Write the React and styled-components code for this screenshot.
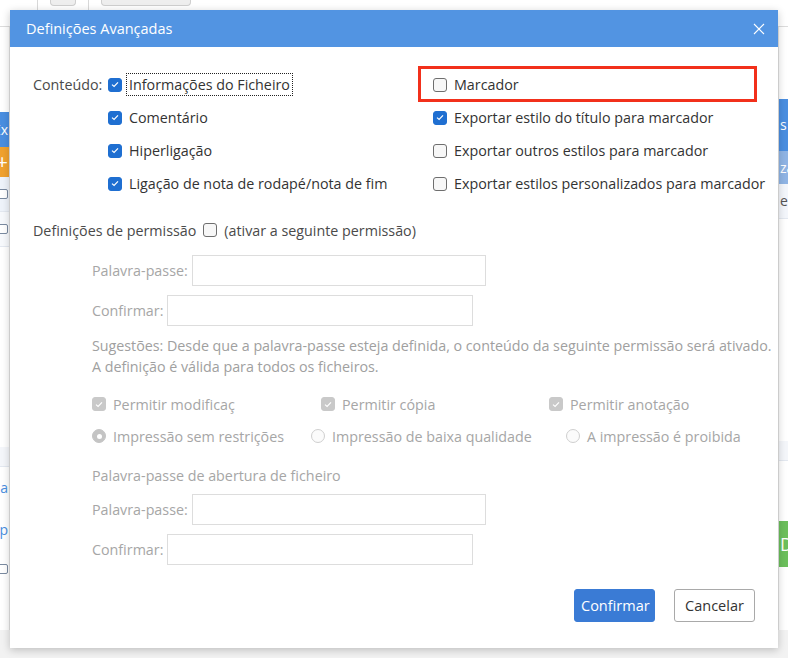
import React from "react"
import styled, { createGlobalStyle } from "styled-components"

const GlobalStyle = createGlobalStyle`
  html, body { margin: 0; padding: 0; }
  body {
    width: 788px;
    height: 658px;
    overflow: hidden;
    background: #ffffff;
    font-family: "Open Sans", "Noto Sans", sans-serif;
  }
  * { box-sizing: border-box; }
`

const text_dark = "#333333"
const text_muted = "#a6a6a6"
const blue_title = "#5294e2"
const blue_check = "#1f6fd1"

/* ---------- background application (mostly hidden) ---------- */

const Screen = styled.div`
  position: relative;
  width: 788px;
  height: 658px;
  overflow: hidden;
  background: #ffffff;
  display: flex;
  flex-direction: column;
`

const TopBar = styled.div`
  height: 27px;
  flex-shrink: 0;
  background: #ffffff;
  border-bottom: 1px solid #dcdcdc;
  display: flex;
  align-items: flex-start;
  gap: 12px;
  padding-left: 37px;
`

const TopDivider = styled.div`
  width: 1px;
  height: 12px;
  background: #d8d8d8;
`

const TopPill = styled.div`
  width: ${(p) => p.w}px;
  height: 6px;
  border: 1px solid #cfcfcf;
  border-top: none;
  border-radius: 0 0 4px 4px;
  background: #eeeeee;
`

const Workspace = styled.div`
  flex: 1;
  display: flex;
  justify-content: space-between;
  background: #f2f2f2;
`

const SidePane = styled.div`
  width: ${(p) => p.w}px;
  overflow: hidden;
  display: flex;
  flex-direction: column;
  align-items: ${(p) => (p.right ? "flex-start" : "flex-end")};
  background: #ffffff;
  border-${(p) => (p.right ? "left" : "right")}: 1px solid #e3e3e3;
  height: 603px;
  font-size: 14px;
`

const PaneBlock = styled.div`
  width: 40px;
  height: ${(p) => p.h}px;
  flex-shrink: 0;
  background: ${(p) => p.bg || "transparent"};
  color: ${(p) => p.fg || "#ffffff"};
  border-bottom: ${(p) => (p.line ? "1px solid #e3e8f0" : "none")};
  display: flex;
  align-items: center;
  justify-content: ${(p) => (p.right ? "flex-start" : "flex-end")};
  padding: 0 1px;
  white-space: nowrap;
  line-height: 1;
`

const MiniBox = styled.span`
  width: 10px;
  height: 10px;
  border: 1px solid #7a8aa0;
  border-radius: 2px;
  background: #ffffff;
`

/* ---------- dialog ---------- */

const Dialog = styled.div`
  position: absolute;
  top: 10px;
  left: 10px;
  width: 768px;
  height: 638px;
  background: #ffffff;
  box-shadow: 0 2px 8px rgba(0, 0, 0, 0.22);
  display: flex;
  flex-direction: column;
  color: ${text_dark};
  font-size: 14.3px;
`

const Header = styled.div`
  height: 37px;
  flex-shrink: 0;
  background: ${blue_title};
  display: flex;
  align-items: center;
  justify-content: space-between;
  padding: 0 10px 0 16px;
  color: #ffffff;
`

const Title = styled.div`
  font-size: 14.5px;
`

const CloseButton = styled.button`
  width: 18px;
  height: 18px;
  padding: 0;
  border: none;
  background: none;
  display: flex;
  align-items: center;
  justify-content: center;
`

const Body = styled.div`
  flex: 1;
  display: flex;
  flex-direction: column;
  padding: 21px 0 0 23px;
  overflow: hidden;
`

const ContentGrid = styled.div`
  display: grid;
  grid-template-columns: 75px 325px 1fr;
  grid-auto-rows: 33px;
  align-items: center;
`

const FieldLabel = styled.div`
  color: #4a4a4a;
  white-space: nowrap;
`

const Option = styled.label`
  position: relative;
  display: flex;
  align-items: center;
  gap: 7px;
  white-space: nowrap;
  color: ${(p) => (p.disabled ? text_muted : text_dark)};
  width: ${(p) => (p.w ? `${p.w}px` : "auto")};
  flex-shrink: 0;
`

const OptionText = styled.span`
  padding: 1px 2px;
  margin-left: -2px;
  outline: ${(p) => (p.focused ? "1px dotted #222" : "none")};
`

const Box = styled.span`
  width: 14px;
  height: 14px;
  flex-shrink: 0;
  border-radius: 3px;
  display: flex;
  align-items: center;
  justify-content: center;
  background: ${(p) =>
    p.checked ? (p.disabled ? "#c9c9c9" : blue_check) : "#f7f7f7"};
  border: 1px solid
    ${(p) => (p.checked ? (p.disabled ? "#c9c9c9" : blue_check) : "#6e6e6e")};
`

const Radio = styled.span`
  width: 14px;
  height: 14px;
  flex-shrink: 0;
  border-radius: 50%;
  display: flex;
  align-items: center;
  justify-content: center;
  background: ${(p) => (p.checked ? "#c4c4c4" : "#fbfbfb")};
  border: 1px solid ${(p) => (p.checked ? "#c4c4c4" : "#cfcfcf")};

  &::after {
    content: "";
    display: ${(p) => (p.checked ? "block" : "none")};
    width: 5px;
    height: 5px;
    border-radius: 50%;
    background: #ffffff;
  }
`

const Highlight = styled.span`
  position: absolute;
  left: -15px;
  top: -8px;
  width: 339px;
  height: 36px;
  border: 3px solid #f2301b;
  pointer-events: none;
`

const PermissionRow = styled.div`
  margin-top: 20px;
  height: 20px;
  display: flex;
  align-items: center;
  gap: 7px;
  color: #4a4a4a;
`

const Indent = styled.div`
  padding-left: 59px;
  display: flex;
  flex-direction: column;
  color: ${text_muted};
`

const InputRow = styled.div`
  display: flex;
  align-items: center;
  gap: 4px;
  margin-top: ${(p) => p.mt}px;
  white-space: nowrap;
`

const TextInput = styled.input`
  width: ${(p) => p.w}px;
  height: 31px;
  border: 1px solid #dddddd;
  background: #ffffff;
  outline: none;
  padding: 0 6px;
  font: inherit;
`

const Hint = styled.div`
  margin-top: 9px;
  line-height: 21px;
  font-size: 14.3px;
  letter-spacing: -0.02px;
  color: #a0a0a0;
  white-space: nowrap;
`

const OptionRow = styled.div`
  display: flex;
  align-items: center;
  height: 24px;
  margin-top: ${(p) => p.mt}px;
`

const SectionTitle = styled.div`
  margin-top: 18px;
  height: 20px;
  line-height: 20px;
`

const Footer = styled.div`
  margin-top: auto;
  display: flex;
  justify-content: flex-end;
  gap: 19px;
  padding: 0 23px 26px 0;
`

const Button = styled.button`
  width: 81px;
  height: 33px;
  border-radius: 3px;
  font-family: inherit;
  font-size: 14.5px;
  cursor: pointer;
  background: ${(p) => (p.primary ? "#3a7bd5" : "#ffffff")};
  color: ${(p) => (p.primary ? "#ffffff" : text_dark)};
  border: 1px solid ${(p) => (p.primary ? "#3a7bd5" : "#a9a9a9")};
`

const CheckMark = () => (
  <svg width="8" height="7" viewBox="0 0 8 7">
    <path d="M1 3.6 L3.1 5.5 L7 1.3" fill="none" stroke="#ffffff" strokeWidth="1.2" />
  </svg>
)

const Check = ({ checked, disabled }) => (
  <Box checked={checked} disabled={disabled}>
    {checked && <CheckMark />}
  </Box>
)

const App = () => {
  return (
    <Screen>
      <GlobalStyle />
      <TopBar>
        <TopDivider />
        <TopPill w={26} />
        <TopDivider />
        <TopPill w={90} />
      </TopBar>
      <Workspace>
        <SidePane w={10}>
          <PaneBlock h={85} bg="#ffffff" />
          <PaneBlock h={35} bg="#4a8ee0">Ex</PaneBlock>
          <PaneBlock h={30} bg="#f0a12e" style={{ fontSize: 20 }}>+</PaneBlock>
          <PaneBlock h={35} bg="#eef3fa" line><MiniBox /></PaneBlock>
          <PaneBlock h={35} bg="#f7f9fc" line><MiniBox /></PaneBlock>
          <PaneBlock h={200} bg="#ffffff" />
          <PaneBlock h={20} bg="#f4f6fa" line />
          <PaneBlock h={42} fg="#4a8ee0">ua</PaneBlock>
          <PaneBlock h={42} fg="#4a8ee0">xp</PaneBlock>
          <PaneBlock h={36}><MiniBox /></PaneBlock>
        </SidePane>
        <SidePane w={10} right>
          <PaneBlock h={72} bg="#ffffff" right />
          <PaneBlock h={52} bg="#4a8ee0" right>s</PaneBlock>
          <PaneBlock h={33} bg="#8fb4e4" right>za</PaneBlock>
          <PaneBlock h={35} bg="#f3f6fb" fg="#555" line right>er</PaneBlock>
          <PaneBlock h={222} bg="#ffffff" right />
          <PaneBlock h={20} bg="#f4f6fa" line right />
          <PaneBlock h={60} right />
          <PaneBlock h={46} bg="#6cbf5c" right style={{ fontSize: 18 }}>D</PaneBlock>
        </SidePane>
      </Workspace>

      <Dialog>
        <Header>
          <Title>Definições Avançadas</Title>
          <CloseButton aria-label="Fechar">
            <svg width="12" height="12" viewBox="0 0 12 12">
              <path d="M1 1 L11 11 M11 1 L1 11" stroke="#ffffff" strokeWidth="1.1" />
            </svg>
          </CloseButton>
        </Header>

        <Body>
          <ContentGrid>
            <FieldLabel>Conteúdo:</FieldLabel>
            <Option>
              <Check checked />
              <OptionText focused>Informações do Ficheiro</OptionText>
            </Option>
            <Option>
              <Highlight />
              <Check />
              <OptionText>Marcador</OptionText>
            </Option>

            <span />
            <Option>
              <Check checked />
              <OptionText>Comentário</OptionText>
            </Option>
            <Option>
              <Check checked />
              <OptionText>Exportar estilo do título para marcador</OptionText>
            </Option>

            <span />
            <Option>
              <Check checked />
              <OptionText>Hiperligação</OptionText>
            </Option>
            <Option>
              <Check />
              <OptionText>Exportar outros estilos para marcador</OptionText>
            </Option>

            <span />
            <Option>
              <Check checked />
              <OptionText>Ligação de nota de rodapé/nota de fim</OptionText>
            </Option>
            <Option>
              <Check />
              <OptionText>Exportar estilos personalizados para marcador</OptionText>
            </Option>
          </ContentGrid>

          <PermissionRow>
            Definições de permissão
            <Check />
            (ativar a seguinte permissão)
          </PermissionRow>

          <Indent>
            <InputRow mt={15}>
              Palavra-passe:
              <TextInput w={294} disabled />
            </InputRow>
            <InputRow mt={9}>
              Confirmar:
              <TextInput w={306} disabled />
            </InputRow>

            <Hint>
              Sugestões: Desde que a palavra-passe esteja definida, o conteúdo da seguinte permissão será ativado.
              <br />
              A definição é válida para todos os ficheiros.
            </Hint>

            <OptionRow mt={15}>
              <Option disabled w={229}>
                <Check checked disabled />
                Permitir modificaç
              </Option>
              <Option disabled w={228}>
                <Check checked disabled />
                Permitir cópia
              </Option>
              <Option disabled>
                <Check checked disabled />
                Permitir anotação
              </Option>
            </OptionRow>

            <OptionRow mt={8}>
              <Option disabled w={219}>
                <Radio checked />
                Impressão sem restrições
              </Option>
              <Option disabled w={255}>
                <Radio />
                Impressão de baixa qualidade
              </Option>
              <Option disabled>
                <Radio />
                A impressão é proibida
              </Option>
            </OptionRow>

            <SectionTitle>Palavra-passe de abertura de ficheiro</SectionTitle>
            <InputRow mt={8}>
              Palavra-passe:
              <TextInput w={294} disabled />
            </InputRow>
            <InputRow mt={9}>
              Confirmar:
              <TextInput w={306} disabled />
            </InputRow>
          </Indent>

          <Footer>
            <Button primary>Confirmar</Button>
            <Button>Cancelar</Button>
          </Footer>
        </Body>
      </Dialog>
    </Screen>
  )
}

export default App
